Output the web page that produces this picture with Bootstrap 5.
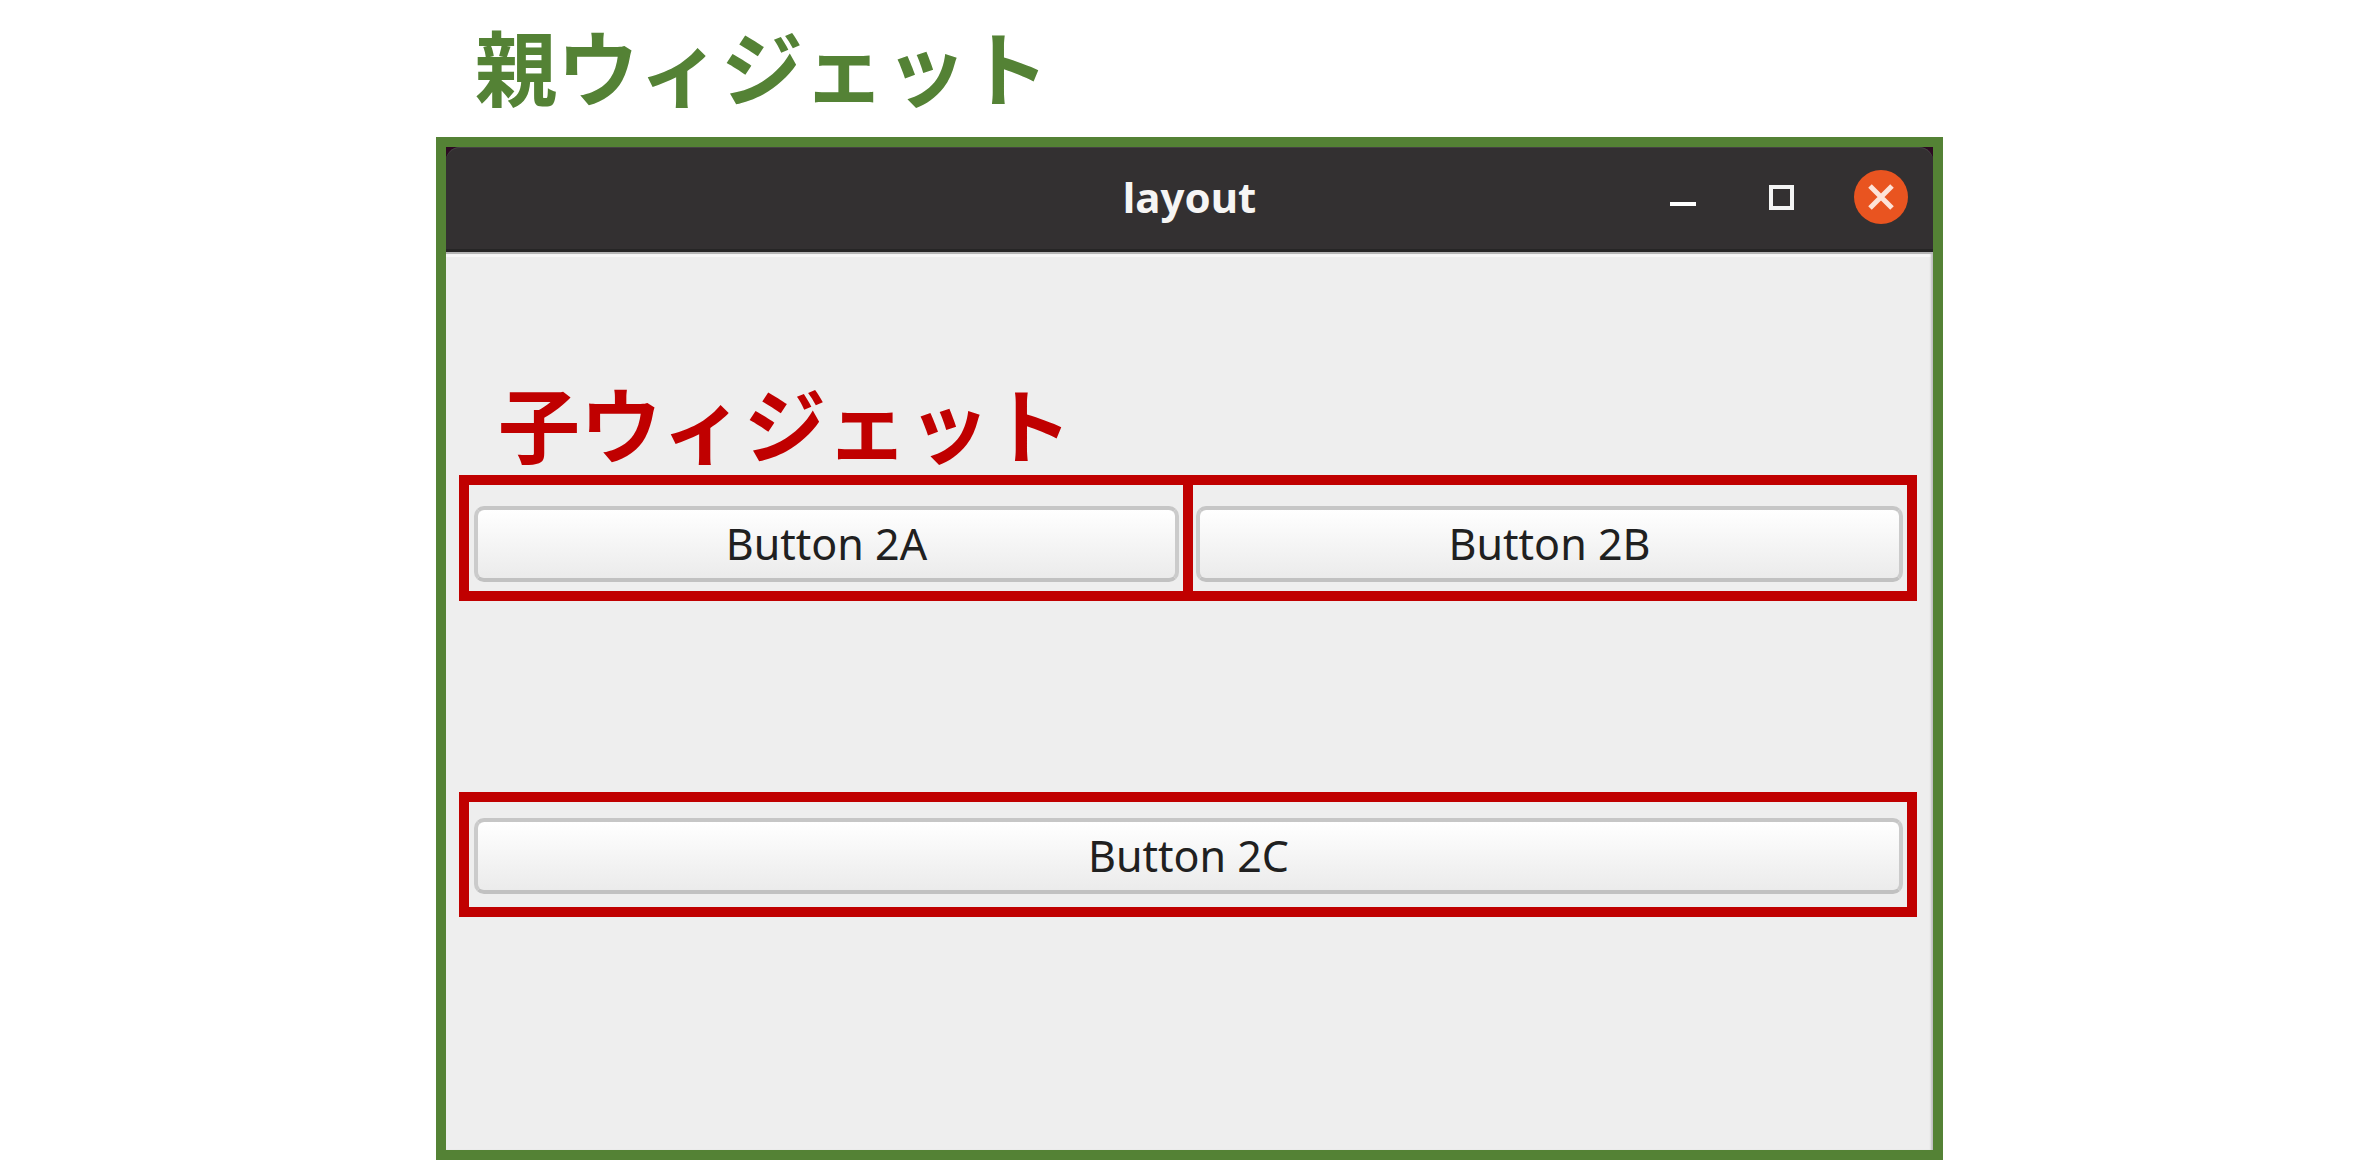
<!DOCTYPE html>
<html lang="ja">
<head>
<meta charset="utf-8">
<meta name="viewport" content="width=device-width, initial-scale=1">
<title>layout</title>
<link href="https://cdn.jsdelivr.net/npm/bootstrap@5.3.0/dist/css/bootstrap.min.css" rel="stylesheet">
<style>
  :root { --parent: #548235; --child: #c00000; --face: #eeeeee; --line: 10px; }
  body { background: #fff; font-family: "Noto Sans", "Noto Sans CJK JP", sans-serif; padding-left: 3px; }
  .figure-wrap { width: 100%; max-width: 1507px; }
  .caption-text { font-family: "Noto Sans CJK JP", sans-serif; font-weight: 700; font-size: 82px; line-height: 96px; }
  .caption-parent { color: var(--parent); padding: 17px 0 24px 39px; }
  .caption-child { color: var(--child); padding: 0 0 5px 39px; }
  .parent-frame { border: var(--line) solid var(--parent); background: #2c0a22; }
  .title-bar { display: grid; grid-template-columns: 1fr auto 1fr; background: #333031; height: 105px; padding: 0 25px 2px; border-bottom: 3px solid #262525; border-radius: 14px 14px 0 0; box-shadow: inset 0 1px #454243; }
  .title-text { color: #f6f5f4; font-size: 42px; line-height: 56px; font-weight: 700; }
  .window-controls { gap: 45px; }
  .control { width: 54px; height: 54px; border: 0; padding: 0; background: transparent; }
  .client-area { background: var(--face); border-top: 2px solid #b5b5b5; box-shadow: inset -3px 0 2px -1px #bdbdbd, inset 0 3px #f7f7f7; padding: 120px 16px 0 13px; }
  .child-frame { border: var(--line) solid var(--child); padding: 21px 4px 9px 5px; }
  .child-frame + .child-frame { margin-left: -10px; padding-left: 3px; }
  .child-row + .child-row { margin-top: 191px; }
  .child-wide { padding-top: 16px; padding-bottom: 13px; }
  .push { height: 76px; padding: 0; border: 4px solid #cbcbcb; border-top-color: #c6c6c6; border-bottom-color: #c1c1c1; border-radius: 10px; background: linear-gradient(#fff, #ebebeb) padding-box; color: #202020; font-size: 43px; line-height: 56px; }
</style>
<script src="https://cdn.jsdelivr.net/npm/bootstrap@5.3.0/dist/js/bootstrap.bundle.min.js"></script>
</head>
<body>
<main class="figure-wrap mx-auto min-vh-100 d-flex flex-column">
  <h1 class="caption-text caption-parent m-0">親ウィジェット</h1>
  <section class="parent-frame flex-grow-1 d-flex flex-column">
    <header class="title-bar align-items-center">
      <span></span>
      <h2 class="title-text m-0">layout</h2>
      <div class="window-controls d-flex justify-content-end">
        <button class="control d-flex" type="button" aria-label="Minimize">
          <svg width="54" height="54" viewBox="0 0 54 54"><path d="M14 34H40" stroke="#fff" stroke-width="4"/></svg>
        </button>
        <button class="control d-flex" type="button" aria-label="Maximize">
          <svg width="54" height="54" viewBox="0 0 54 54"><rect x="16" y="17" width="21" height="21" fill="none" stroke="#f4f4f4" stroke-width="4"/></svg>
        </button>
        <button class="control d-flex" type="button" aria-label="Close">
          <svg width="54" height="54" viewBox="0 0 54 54"><circle cx="27" cy="27" r="27" fill="#e95420"/><path d="M16 16 38 38M38 16 16 38" stroke="#fde3d8" stroke-width="5"/></svg>
        </button>
      </div>
    </header>
    <div class="client-area flex-grow-1">
      <h3 class="caption-text caption-child m-0">子ウィジェット</h3>
      <div class="child-row d-flex">
        <div class="child-frame flex-fill w-50"><button class="push w-100 d-block" type="button">Button 2A</button></div>
        <div class="child-frame flex-fill w-50"><button class="push w-100 d-block" type="button">Button 2B</button></div>
      </div>
      <div class="child-row d-flex">
        <div class="child-frame child-wide flex-fill"><button class="push w-100 d-block" type="button">Button 2C</button></div>
      </div>
    </div>
  </section>
</main>
</body>
</html>
